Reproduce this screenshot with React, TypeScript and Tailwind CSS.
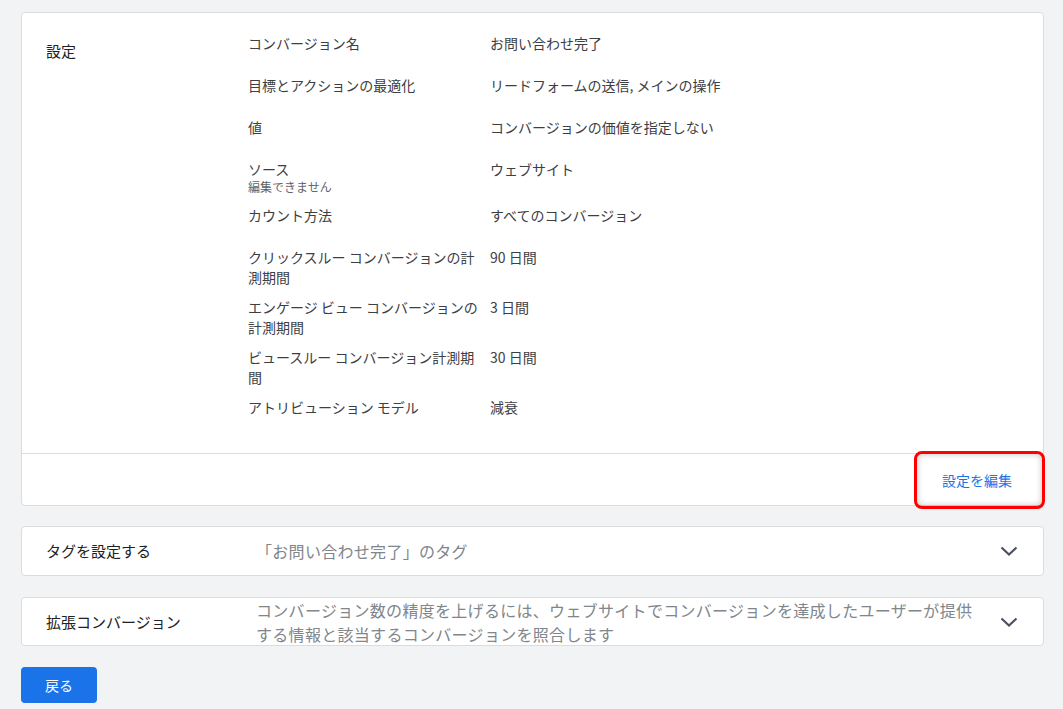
import React from "react";

const font = { fontFamily: '"Noto Sans CJK JP", "Noto Sans", "Liberation Sans", sans-serif' };

type Row = { label: string[]; sub?: string; value: string };

const rows: Row[] = [
  { label: ["コンバージョン名"], value: "お問い合わせ完了" },
  { label: ["目標とアクションの最適化"], value: "リードフォームの送信, メインの操作" },
  { label: ["値"], value: "コンバージョンの価値を指定しない" },
  { label: ["ソース"], sub: "編集できません", value: "ウェブサイト" },
  { label: ["カウント方法"], value: "すべてのコンバージョン" },
  { label: ["クリックスルー コンバージョンの計", "測期間"], value: "90 日間" },
  { label: ["エンゲージ ビュー コンバージョンの", "計測期間"], value: "3 日間" },
  { label: ["ビュースルー コンバージョン計測期", "間"], value: "30 日間" },
  { label: ["アトリビューション モデル"], value: "減衰" },
];

function Chevron() {
  return (
    <svg width="24" height="24" viewBox="0 0 24 24" className="block">
      <path d="M4.5 8.5 L12 15.5 L19.5 8.5" fill="none" stroke="#4a5160" strokeWidth="2.2" strokeLinecap="butt" />
    </svg>
  );
}

export default function App() {
  return (
    <div className="min-h-[709px] w-[1063px] bg-[#f1f3f4] pt-[12px] pl-[21px] pr-[19px]" style={font}>
      {/* Settings card */}
      <div className="relative rounded-[4px] border border-[#dadce0] bg-white">
        <div className="flex pl-[24px] pt-[20px] pb-[24px]">
          <div className="w-[202px] pt-[8px] text-[15px] leading-[20px] text-[#202124]">設定</div>
          <div className="flex flex-col gap-[10px]">
            {rows.map((r, i) => (
              <div key={i} className="flex min-h-[32px] text-[14px] leading-[20px] text-[#3c4043]">
                <div className="w-[242px] shrink-0">
                  {r.label.map((l, j) => (
                    <div key={j} className="whitespace-nowrap">{l}</div>
                  ))}
                  {r.sub && <div className="text-[12px] leading-[16px] text-[#5f6368]">{r.sub}</div>}
                </div>
                <div className="whitespace-nowrap">{r.value}</div>
              </div>
            ))}
          </div>
        </div>
        <div className="relative flex h-[52px] items-center justify-end border-t border-[#dadce0] pr-[31px]">
          <span className="text-[14px] leading-[20px] text-[#1a73e8]">設定を編集</span>
          <div className="pointer-events-none absolute -top-[3px] -right-[2px] h-[58px] w-[131px] rounded-[8px] border-[3px] border-[#ff0000] shadow-[inset_0_0_6px_rgba(0,0,0,0.25)]" />
        </div>
      </div>

      {/* Tag card */}
      <div className="mt-[20px] flex h-[50px] items-center rounded-[4px] border border-[#dadce0] bg-white pl-[24px] pr-[22px]">
        <div className="w-[210px] shrink-0 text-[15px] leading-[20px] text-[#202124]">タグを設定する</div>
        <div className="flex-1 text-[16px] tracking-[0.3px] leading-[24px] text-[#80868b]">「お問い合わせ完了」のタグ</div>
        <Chevron />
      </div>

      {/* Enhanced conversions card */}
      <div className="mt-[21px] flex h-[49px] items-center rounded-[4px] border border-[#dadce0] bg-white pl-[24px] pr-[22px]">
        <div className="w-[210px] shrink-0 text-[15px] leading-[20px] text-[#202124]">拡張コンバージョン</div>
        <div className="flex-1 text-[16px] tracking-[0.3px] leading-[24px] text-[#80868b]">
          <div className="whitespace-nowrap">コンバージョン数の精度を上げるには、ウェブサイトでコンバージョンを達成したユーザーが提供</div>
          <div className="whitespace-nowrap">する情報と該当するコンバージョンを照合します</div>
        </div>
        <Chevron />
      </div>

      <button className="mt-[21px] flex h-[36px] w-[76px] items-center justify-center rounded-[4px] bg-[#1a73e8] text-[14px] leading-[20px] text-white">
        戻る
      </button>
    </div>
  );
}
